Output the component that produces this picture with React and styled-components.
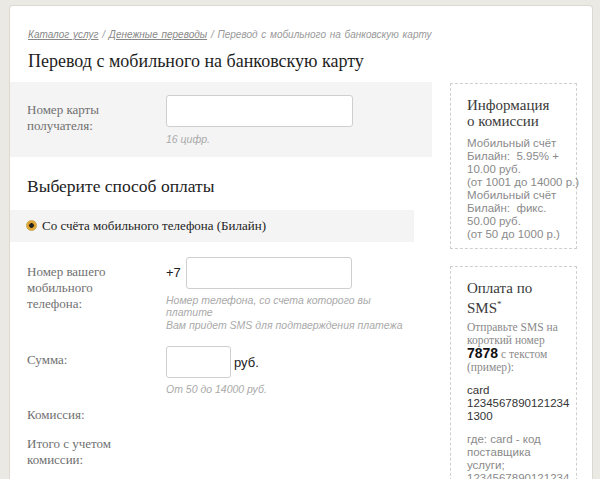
import React from "react";
import styled, { createGlobalStyle } from "styled-components";

const Global = createGlobalStyle`
  html, body { margin: 0; padding: 0; background: #ebe9e3; overflow: hidden; }
  body { font-family: "Liberation Serif", serif; }
`;

const Card = styled.div`
  margin: 5px 7px 0 9px;
  background: #fff;
  border: 1px solid #dcd9d1;
  border-bottom: none;
  border-radius: 4px 4px 0 0;
  display: flex;
  height: 520px;
`;

const Main = styled.div`
  width: 422px;
  display: flex;
  flex-direction: column;
`;

const Crumbs = styled.div`
  padding: 23px 0 0 18px;
  font-family: "Liberation Sans", Arial, sans-serif;
  font-style: italic;
  font-size: 10px;
  line-height: 12px;
  color: #999;
  white-space: nowrap;
  word-spacing: 1px;
  a { color: #888; text-decoration: underline; }
`;

const Title = styled.h1`
  margin: 8px 0 0 18px;
  font-weight: normal;
  font-size: 18px;
  line-height: 24px;
  color: #1e1e1e;
`;

const Band = styled.div`
  margin-top: 9px;
  background: #f4f4f4;
  padding: 13px 0 11px 0;
`;

const Row = styled.div`
  display: flex;
  padding-left: 17px;
  margin-top: ${(p) => p.$mt || 0}px;
`;

const Label = styled.div`
  width: 139px;
  flex: none;
  font-size: 13px;
  line-height: 16px;
  color: #707070;
  padding-top: ${(p) => p.$pt || 0}px;
`;

const Field = styled.div`
  display: flex;
  flex-direction: column;
`;

const Line = styled.div`
  display: flex;
  align-items: center;
`;

const Input = styled.div`
  width: ${(p) => p.$w}px;
  height: 30px;
  background: #fff;
  border: 1px solid #cfcfcf;
  border-radius: 3px;
  box-sizing: content-box;
`;

const Prefix = styled.span`
  font-family: "Liberation Sans", Arial, sans-serif;
  font-size: 13px;
  color: #222;
  margin-right: ${(p) => p.$mr || 0}px;
  margin-left: ${(p) => p.$ml || 0}px;
`;

const Hint = styled.div`
  font-family: "Liberation Sans", Arial, sans-serif;
  font-style: italic;
  font-size: 10.5px;
  line-height: 12.5px;
  color: #aaa;
  max-width: 244px;
  margin-top: ${(p) => p.$mt || 4}px;
`;

const SubTitle = styled.h2`
  margin: 18px 0 0 17px;
  font-weight: normal;
  font-size: 17.5px;
  line-height: 22px;
  color: #222;
`;

const RadioBand = styled.div`
  margin-top: 13px;
  width: 404px;
  height: 32px;
  background: #f4f4f4;
  display: flex;
  align-items: center;
  padding-left: 16px;
  box-sizing: border-box;
  gap: 5px;
  font-size: 13px;
  color: #222;
`;

const Radio = styled.span`
  width: 11px;
  height: 11px;
  border-radius: 50%;
  box-sizing: border-box;
  border: 1px solid #c9a24a;
  background: radial-gradient(circle, #222 0 2px, #d89a22 2.6px, #f3c766 100%);
`;

const Buttons = styled.div`
  display: flex;
  gap: 18px;
  padding-left: 157px;
  margin-top: 11px;
`;

const Button = styled.div`
  width: ${(p) => p.$w}px;
  height: 28px;
  border-radius: 3px;
  border-top: 2px solid ${(p) => p.$c};
  background: #f7f7f7;
`;

const Side = styled.div`
  flex: 1;
  padding: 77px 0 0 18px;
  display: flex;
  flex-direction: column;
  gap: 17px;
`;

const Box = styled.div`
  width: 127px;
  box-sizing: border-box;
  border: 1px dashed #cfcfcf;
  padding: 14px 0 10px 16px;
  height: ${(p) => (p.$h ? p.$h + "px" : "auto")};
`;

const BoxTitle = styled.div`
  font-size: 15px;
  line-height: 15.5px;
  color: #3a3a3a;
  margin-bottom: ${(p) => p.$mb || 8}px;
`;

const BoxText = styled.div`
  font-family: ${(p) =>
    p.$serif ? '"Liberation Serif", serif' : '"Liberation Sans", Arial, sans-serif'};
  font-size: 11.5px;
  line-height: 13px;
  color: ${(p) => p.$color || "#8a8a8a"};
  white-space: nowrap;
  margin-top: ${(p) => p.$mt || 0}px;
  b {
    font-family: "Liberation Sans", Arial, sans-serif;
    font-size: 14px;
    color: #111;
  }
`;

export default function App() {
  return (
    <>
      <Global />
      <Card>
        <Main>
          <Crumbs>
            <a>Каталог услуг</a> / <a>Денежные переводы</a> / Перевод с мобильного на банковскую карту
          </Crumbs>
          <Title>Перевод с мобильного на банковскую карту</Title>
          <Band>
            <Row>
              <Label $pt={7}>Номер карты<br />получателя:</Label>
              <Field>
                <Input $w={185} />
                <Hint $mt={6}>16 цифр.</Hint>
              </Field>
            </Row>
          </Band>
          <SubTitle>Выберите способ оплаты</SubTitle>
          <RadioBand>
            <Radio />
            Со счёта мобильного телефона (Билайн)
          </RadioBand>
          <Row $mt={15}>
            <Label $pt={7}>Номер вашего<br />мобильного<br />телефона:</Label>
            <Field>
              <Line>
                <Prefix $mr={5}>+7</Prefix>
                <Input $w={164} />
              </Line>
              <Hint $mt={5}>
                Номер телефона, со счета которого вы платите
                <br />
                Вам придет SMS для подтверждения платежа
              </Hint>
            </Field>
          </Row>
          <Row $mt={15}>
            <Label $pt={6}>Сумма:</Label>
            <Field>
              <Line>
                <Input $w={63} />
                <Prefix $ml={3}>руб.</Prefix>
              </Line>
              <Hint $mt={5}>От 50 до 14000 руб.</Hint>
            </Field>
          </Row>
          <Row $mt={11}>
            <Label>Комиссия:</Label>
          </Row>
          <Row $mt={13}>
            <Label>Итого с учетом<br />комиссии:</Label>
          </Row>
          <Buttons>
            <Button $w={62} $c="#cfcfcf" />
            <Button $w={90} $c="#8a8a8a" />
          </Buttons>
        </Main>
        <Side>
          <Box $h={166}>
            <BoxTitle>Информация<br />о комиссии</BoxTitle>
            <BoxText>
              Мобильный счёт<br />
              Билайн:&nbsp; 5.95% +<br />
              10.00 руб.<br />
              (от 1001 до 14000 р.)<br />
              Мобильный счёт<br />
              Билайн:&nbsp; фикс.<br />
              50.00 руб.<br />
              (от 50 до 1000 р.)
            </BoxText>
          </Box>
          <Box>
            <BoxTitle $mb={5}>Оплата по<br />SMS<sup style={{ fontSize: 9 }}>*</sup></BoxTitle>
            <BoxText $serif>
              Отправьте SMS на<br />
              короткий номер<br />
              <b>7878</b> с текстом<br />
              (пример):
            </BoxText>
            <BoxText $color="#333" $mt={10}>
              card<br />
              1234567890121234<br />
              1300
            </BoxText>
            <BoxText $mt={10}>
              где: card - код<br />
              поставщика<br />
              услуги;<br />
              1234567890121234
            </BoxText>
          </Box>
        </Side>
      </Card>
    </>
  );
}
